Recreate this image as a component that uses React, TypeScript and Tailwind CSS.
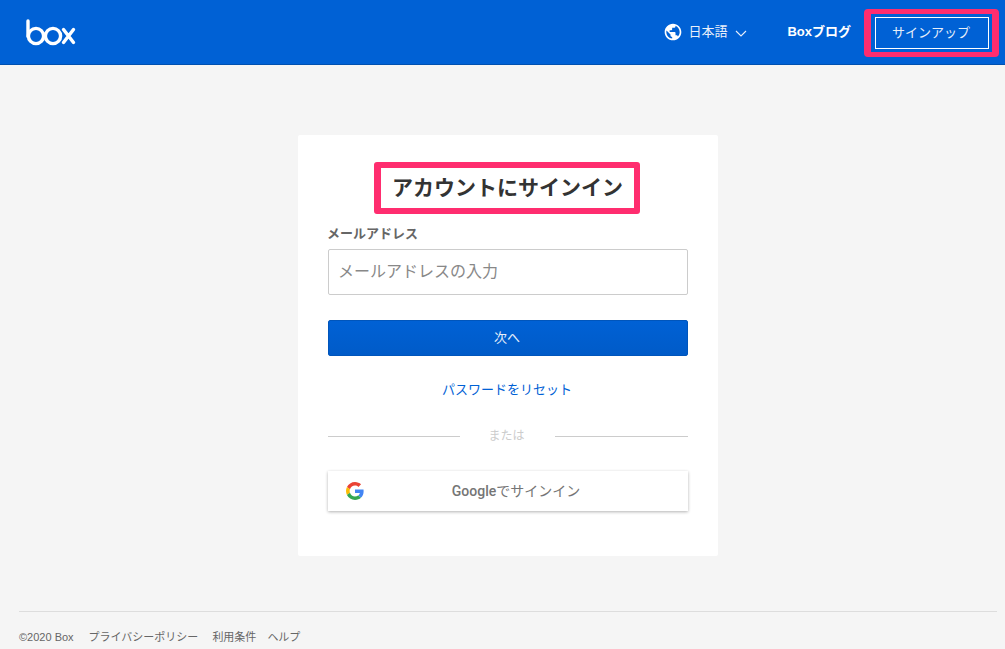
import { MdPublic } from 'react-icons/md';

const GoogleLogo = () => (
  <svg width="18" height="18" viewBox="0 0 48 48">
    <path fill="#EA4335" d="M24 9.5c3.54 0 6.71 1.22 9.21 3.6l6.85-6.85C35.9 2.38 30.47 0 24 0 14.62 0 6.51 5.38 2.56 13.22l7.98 6.19C12.43 13.72 17.74 9.5 24 9.5z" />
    <path fill="#4285F4" d="M46.98 24.55c0-1.57-.15-3.09-.38-4.55H24v9.02h12.94c-.58 2.96-2.26 5.48-4.78 7.18l7.73 6c4.51-4.18 7.09-10.36 7.09-17.65z" />
    <path fill="#FBBC05" d="M10.53 28.59c-.48-1.45-.76-2.99-.76-4.59s.27-3.14.76-4.59l-7.98-6.19C.92 16.46 0 20.12 0 24c0 3.88.92 7.54 2.56 10.78l7.97-6.19z" />
    <path fill="#34A853" d="M24 48c6.48 0 11.93-2.13 15.89-5.81l-7.73-6c-2.15 1.45-4.92 2.3-8.16 2.3-6.26 0-11.57-4.22-13.47-9.91l-7.98 6.19C6.51 42.62 14.62 48 24 48z" />
  </svg>
);

const BoxLogo = () => (
  <svg width="50" height="27" viewBox="0 0 50 27" fill="none" stroke="white" strokeWidth="3.4" strokeLinecap="round">
    <path d="M2 2v15.5" />
    <circle cx="10" cy="17" r="7.6" />
    <circle cx="27" cy="17" r="7.6" />
    <path d="M37.5 10.5l10 13M47.5 10.5l-10 13" />
  </svg>
);

export default function App() {
  return (
    <div className="min-h-[649px] bg-[#f5f5f5] font-['Liberation_Sans','Noto_Sans_CJK_JP',sans-serif] flex flex-col overflow-hidden">
      <header className="h-[65px] bg-[#0061d5] border-b border-[#0050b0] flex items-center justify-between pl-[26px] pr-[6px]">
        <BoxLogo />
        <div className="flex items-center text-white">
          <div className="flex items-center">
            <MdPublic size={20} className="text-white" />
            <span className="ml-[5px] text-[13px] text-[#e8effa]">日本語</span>
            <svg className="ml-[8px] mt-[3px]" width="12" height="7" viewBox="0 0 12 7" fill="none" stroke="#e8effa" strokeWidth="1.1">
              <path d="M1 1l5 5 5-5" />
            </svg>
          </div>
          <a className="ml-[40px] text-[13px] font-bold">Boxブログ</a>
          <div className="ml-[13px] mt-[2px] border-x-[7px] border-y-[5px] border-[#ff2d6f] rounded-[4px] pl-[4px] pr-[3px] h-[48px] flex items-center">
            <button className="w-[114px] h-[32px] border border-white text-[13px] text-[#e8effa] bg-[#0061d5] pr-[2px]">サインアップ</button>
          </div>
        </div>
      </header>

      <main className="flex-1 flex flex-col">
        <div className="flex justify-center pl-[11px] pt-[70px]">
          <div className="w-[420px] h-[421px] bg-white rounded-[2px] px-[30px] pt-[27px] flex flex-col">
            <div className="self-start ml-[46px] w-[266px] h-[52px] border-[6px] border-l-[7px] border-[#ff2d6f] rounded-[3px] flex items-center justify-center">
              <h1 className="text-[21px] font-bold text-[#333] whitespace-nowrap">アカウントにサインイン</h1>
            </div>
            <label className="mt-[12px] -ml-px h-[16px] leading-[16px] text-[13px] font-bold text-[#666]">メールアドレス</label>
            <div className="mt-[7px] h-[46px] border border-[#ccc] rounded-[2px] flex items-center px-[9px] text-[16px] text-[#888]">
              メールアドレスの入力
            </div>
            <button className="mt-[25px] h-[36px] pr-[2px] bg-gradient-to-b from-[#0061d5] to-[#005bc8] border border-[#0055bb] rounded-[2px] text-[13px] text-[#e8effa]">次へ</button>
            <a className="mt-[26px] pr-[2px] h-[16px] leading-[16px] text-center text-[13px] text-[#0061d5]">パスワードをリセット</a>
            <div className="mt-[29px] flex items-center">
              <div className="w-[132px] h-px bg-[#ccc]" />
              <span className="flex-1 text-center text-[12px] text-[#ccc] pr-[2px]">または</span>
              <div className="w-[133px] h-px bg-[#ccc]" />
            </div>
            <button className="mt-[26px] h-[40px] bg-white shadow-[0_1px_3px_rgba(0,0,0,0.3)] flex items-center pl-[18px]">
              <GoogleLogo />
              <span className="flex-1 text-center text-[14px] text-[#757575] pr-[20px] font-['Roboto','Noto_Sans_CJK_JP',sans-serif]">
                <span className="font-medium">Google</span>でサインイン
              </span>
            </button>
          </div>
        </div>

        <footer className="mt-[55px] w-full pl-[19px] pr-[8px]">
          <div className="border-t border-[#ddd] pt-[18px] flex items-center text-[11px] text-[#666] leading-[14px]">
            <span>©2020 Box</span>
            <a className="ml-[15px]">プライバシーポリシー</a>
            <a className="ml-[14px]">利用条件</a>
            <a className="ml-[11px]">ヘルプ</a>
          </div>
        </footer>
      </main>
    </div>
  );
}
